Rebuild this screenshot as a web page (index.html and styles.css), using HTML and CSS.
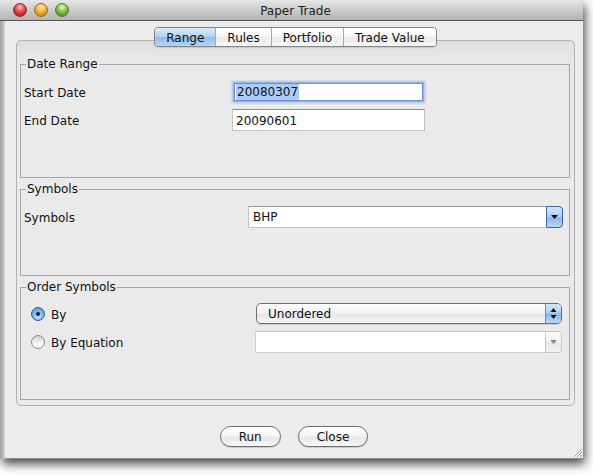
FILE: index.html
```html
<!DOCTYPE html>
<html>
<head>
<meta charset="utf-8">
<link rel="stylesheet" href="styles.css">
</head>
<body>
<div class="window">
  <div class="titlebar">
    <div class="lights">
      <span class="light red"></span>
      <span class="light yellow"></span>
      <span class="light green"></span>
    </div>
    <div class="title">Paper Trade</div>
    <div></div>
  </div>
  <div class="body">
    <div class="edge"></div>
    <div class="content">
      <div class="tabbox">
        <div class="tabbar">
          <div class="tabs">
            <div class="tab selected">Range</div>
            <div class="tab">Rules</div>
            <div class="tab">Portfolio</div>
            <div class="tab">Trade Value</div>
          </div>
        </div>
        <div class="panel">
          <fieldset class="group">
            <legend>Date Range</legend>
            <div class="gbody gbody-date">
              <div class="row">
                <div class="lbl">Start Date</div>
                <div class="field focused"><span class="sel">20080307</span></div>
              </div>
              <div class="row">
                <div class="lbl">End Date</div>
                <div class="field">20090601</div>
              </div>
            </div>
          </fieldset>
          <fieldset class="group">
            <legend>Symbols</legend>
            <div class="gbody gbody-sym">
              <div class="row">
                <div class="lbl lbl-wide">Symbols</div>
                <div class="combo">
                  <div class="combo-text">BHP</div>
                  <div class="combo-btn">
                    <svg width="7" height="4" viewBox="0 0 7 4"><path d="M0 0H7L3.5 4Z" fill="#111"/></svg>
                  </div>
                </div>
              </div>
            </div>
          </fieldset>
          <fieldset class="group">
            <legend>Order Symbols</legend>
            <div class="gbody gbody-order">
              <div class="row row-pop">
                <div class="radio-lbl">
                  <span class="radio on"><span class="dot"></span></span>
                  <span class="rtext">By</span>
                </div>
                <div class="popup">
                  <div class="popup-text">Unordered</div>
                  <div class="popup-cap">
                    <svg width="7" height="11" viewBox="0 0 7 11"><path d="M3.5 0L6.5 4H0.5Z" fill="#111"/><path d="M0.5 7H6.5L3.5 11Z" fill="#111"/></svg>
                  </div>
                </div>
              </div>
              <div class="row row-eq">
                <div class="radio-lbl">
                  <span class="radio"></span>
                  <span class="rtext">By Equation</span>
                </div>
                <div class="combo disabled">
                  <div class="combo-text"></div>
                  <div class="combo-btn">
                    <svg width="7" height="4" viewBox="0 0 7 4"><path d="M0 0H7L3.5 4Z" fill="#8a8a8a"/></svg>
                  </div>
                </div>
              </div>
            </div>
          </fieldset>
        </div>
      </div>
      <div class="buttons">
        <div class="btn">Run</div>
        <div class="btn">Close</div>
      </div>
      <svg class="grip" width="9" height="9" viewBox="0 0 9 9">
        <path d="M9 1L1 9M9 4L4 9M9 7L7 9" stroke="#9a9a9a" stroke-width="1"/>
        <path d="M9 2L2 9M9 5L5 9" stroke="#ffffff" stroke-width="1"/>
      </svg>
    </div>
  </div>
</div>
</body>
</html>
```

FILE: styles.css
```css
* { box-sizing: border-box; }
html, body { margin: 0; padding: 0; }
body {
  width: 593px;
  height: 475px;
  overflow: hidden;
  background: #ffffff;
  font-family: "DejaVu Sans", "Noto Sans", sans-serif;
  font-size: 12px;
  color: #111;
}

.window {
  width: 583px;
  height: 459px;
  display: flex;
  flex-direction: column;
  box-shadow: 2px 5px 10px rgba(0, 0, 0, 0.72);
}

.titlebar {
  height: 21px;
  flex: none;
  border-bottom: 1px solid #555;
  background: linear-gradient(#e6e6e6, #b3b3b3);
  display: grid;
  grid-template-columns: 1fr auto 1fr;
  align-items: center;
}
.lights { display: flex; gap: 7px; padding-left: 13px; }
.light {
  width: 14px;
  height: 14px;
  border-radius: 50%;
}
.red {
  background: radial-gradient(circle at 50% 28%, #ffd6d6 0, #f25a5a 35%, #c41a1f 75%, #e05050 100%);
  border: 1px solid #8d2b2b;
}
.yellow {
  background: radial-gradient(circle at 50% 28%, #fff2c8 0, #f7c046 35%, #d98a10 75%, #eab040 100%);
  border: 1px solid #9a6a1a;
}
.green {
  background: radial-gradient(circle at 50% 28%, #e6ffd0 0, #93d25a 35%, #4f9b1c 75%, #84c24a 100%);
  border: 1px solid #4d7a2a;
}
.title { font-size: 12px; color: #222; padding-left: 8px; padding-top: 1px; }

.body { flex: 1; display: flex; }
.edge {
  width: 5px;
  background: linear-gradient(to right, #9c9c9c, #d2d2d2);
}
.content {
  flex: 1;
  position: relative;
  background: #ececec;
  border-bottom: 1px solid #8a8a8a;
  padding-top: 6px;
}

.tabbox { width: 559px; margin-left: 11px; }
.tabbar {
  display: flex;
  justify-content: center;
  margin-bottom: -7px;
  position: relative;
  z-index: 1;
}
.tabs {
  display: flex;
  height: 20px;
  border: 1px solid #858585;
  border-radius: 4px;
  overflow: hidden;
  box-shadow: 0 1px 1px rgba(0,0,0,0.12);
}
.tab {
  padding: 1px 11px 0;
  line-height: 18px;
  border-left: 1px solid #a8a8a8;
  background: linear-gradient(#ffffff 0%, #f7f7f7 48%, #ebebeb 52%, #f6f6f6 100%);
}
.tab:first-child { border-left: 0; }
.tab.selected {
  background: linear-gradient(#d9eafb 0%, #b4d3f3 48%, #8fbcec 52%, #b2d6f8 100%);
}

.panel {
  height: 366px;
  border: 1px solid #b1b1b1;
  border-radius: 5px;
  padding: 16px 4px 5px 3px;
  background: linear-gradient(#dedede 0px, #e7e7e7 16px, #eaeaea 40px);
}

.group {
  margin: 0;
  padding: 0 4px 0 3px;
  border: 1px solid #a6a6a6;
  min-width: 0;
}
.group + .group { margin-top: 4px; }
.group legend {
  padding: 1px 1px 0;
  margin-left: 2px;
  font-size: 12px;
  line-height: 13px;
}
.gbody-date { height: 106px; padding-top: 10px; }
.gbody-sym { height: 79px; padding-top: 10px; }
.gbody-order { height: 105px; padding-top: 9px; }

.row { display: flex; align-items: center; height: 22px; }
.row + .row { margin-top: 6px; }
.lbl { width: 208px; padding-top: 2px; }
.lbl-wide { width: 224px; }

.field {
  width: 193px;
  height: 22px;
  background: #fff;
  border: 1px solid #c2c2c2;
  border-top-color: #8c8c8c;
  padding: 1px 3px 0;
  line-height: 20px;
}
.field.focused {
  width: 189px;
  height: 18px;
  margin: 2px;
  border-color: #6f90c8;
  box-shadow: 0 0 0 1px #93b5e6, 0 0 2px 2px rgba(110, 155, 220, 0.55);
  padding: 0 1px;
  line-height: 16px;
}
.sel {
  display: inline-block;
  background: #a9cdf8;
  line-height: 16px;
  padding: 0 1px;
}

.combo {
  display: flex;
  width: 315px;
  height: 22px;
}
.combo-text {
  flex: 1;
  background: #fff;
  border: 1px solid #c4c4c4;
  border-top-color: #999;
  border-right: 0;
  padding: 1px 0 0 4px;
  line-height: 19px;
}
.combo-btn {
  width: 17px;
  display: flex;
  align-items: center;
  justify-content: center;
  border: 1px solid #3e62a4;
  border-radius: 0 4px 4px 0;
  background: linear-gradient(#d6e7f9 0%, #abcdf1 48%, #86b6ea 52%, #b6d8f8 100%);
}
.combo.disabled { width: 307px; margin-left: -1px; }
.combo.disabled .combo-text { border-color: #d2d2d2; border-top-color: #c2c2c2; }
.combo.disabled .combo-btn {
  border-color: #c6c6c6;
  background: linear-gradient(#fbfbfb 0%, #f2f2f2 50%, #e8e8e8 52%, #f3f3f3 100%);
}

.row-pop { height: 21px; }
.row + .row-eq { margin-top: 7px; }
.radio-lbl {
  width: 232px;
  display: flex;
  align-items: center;
  gap: 6px;
  padding-left: 7px;
}
.rtext { padding-top: 2px; }
.radio {
  width: 14px;
  height: 14px;
  border-radius: 50%;
  border: 1px solid #8b8b8b;
  background: linear-gradient(#cfcfcf, #f4f4f4 60%, #ffffff);
  display: flex;
  align-items: center;
  justify-content: center;
}
.radio.on {
  border-color: #35589a;
  background: radial-gradient(circle at 50% 70%, #cfe6ff 0, #8bbcf0 40%, #4f8fdc 100%);
}
.dot { width: 4px; height: 4px; border-radius: 50%; background: #0f1e3c; }

.popup {
  display: flex;
  width: 306px;
  height: 21px;
  border: 1px solid #6c6c6c;
  border-radius: 5px;
  overflow: hidden;
  background: linear-gradient(#ffffff 0%, #f3f3f3 48%, #e6e6e6 52%, #f6f6f6 100%);
  box-shadow: 0 1px 1px rgba(0,0,0,0.12);
}
.popup-text { flex: 1; padding: 1px 0 0 11px; line-height: 18px; }
.popup-cap {
  width: 16px;
  display: flex;
  align-items: center;
  justify-content: center;
  border-left: 1px solid #6a8ac4;
  background: linear-gradient(#d6e7f9 0%, #abcdf1 48%, #86b6ea 52%, #b6d8f8 100%);
}

.buttons {
  display: flex;
  justify-content: center;
  gap: 17px;
  margin-top: 20px;
}
.btn {
  height: 21px;
  padding: 1px 18px 0;
  line-height: 18px;
  border: 1px solid #6e6e6e;
  border-radius: 11px;
  background: linear-gradient(#ffffff 0%, #f5f5f5 48%, #e7e7e7 52%, #f7f7f7 100%);
  box-shadow: 0 1px 1px rgba(0,0,0,0.15);
}

.grip { position: absolute; right: 1px; bottom: 1px; }
```
